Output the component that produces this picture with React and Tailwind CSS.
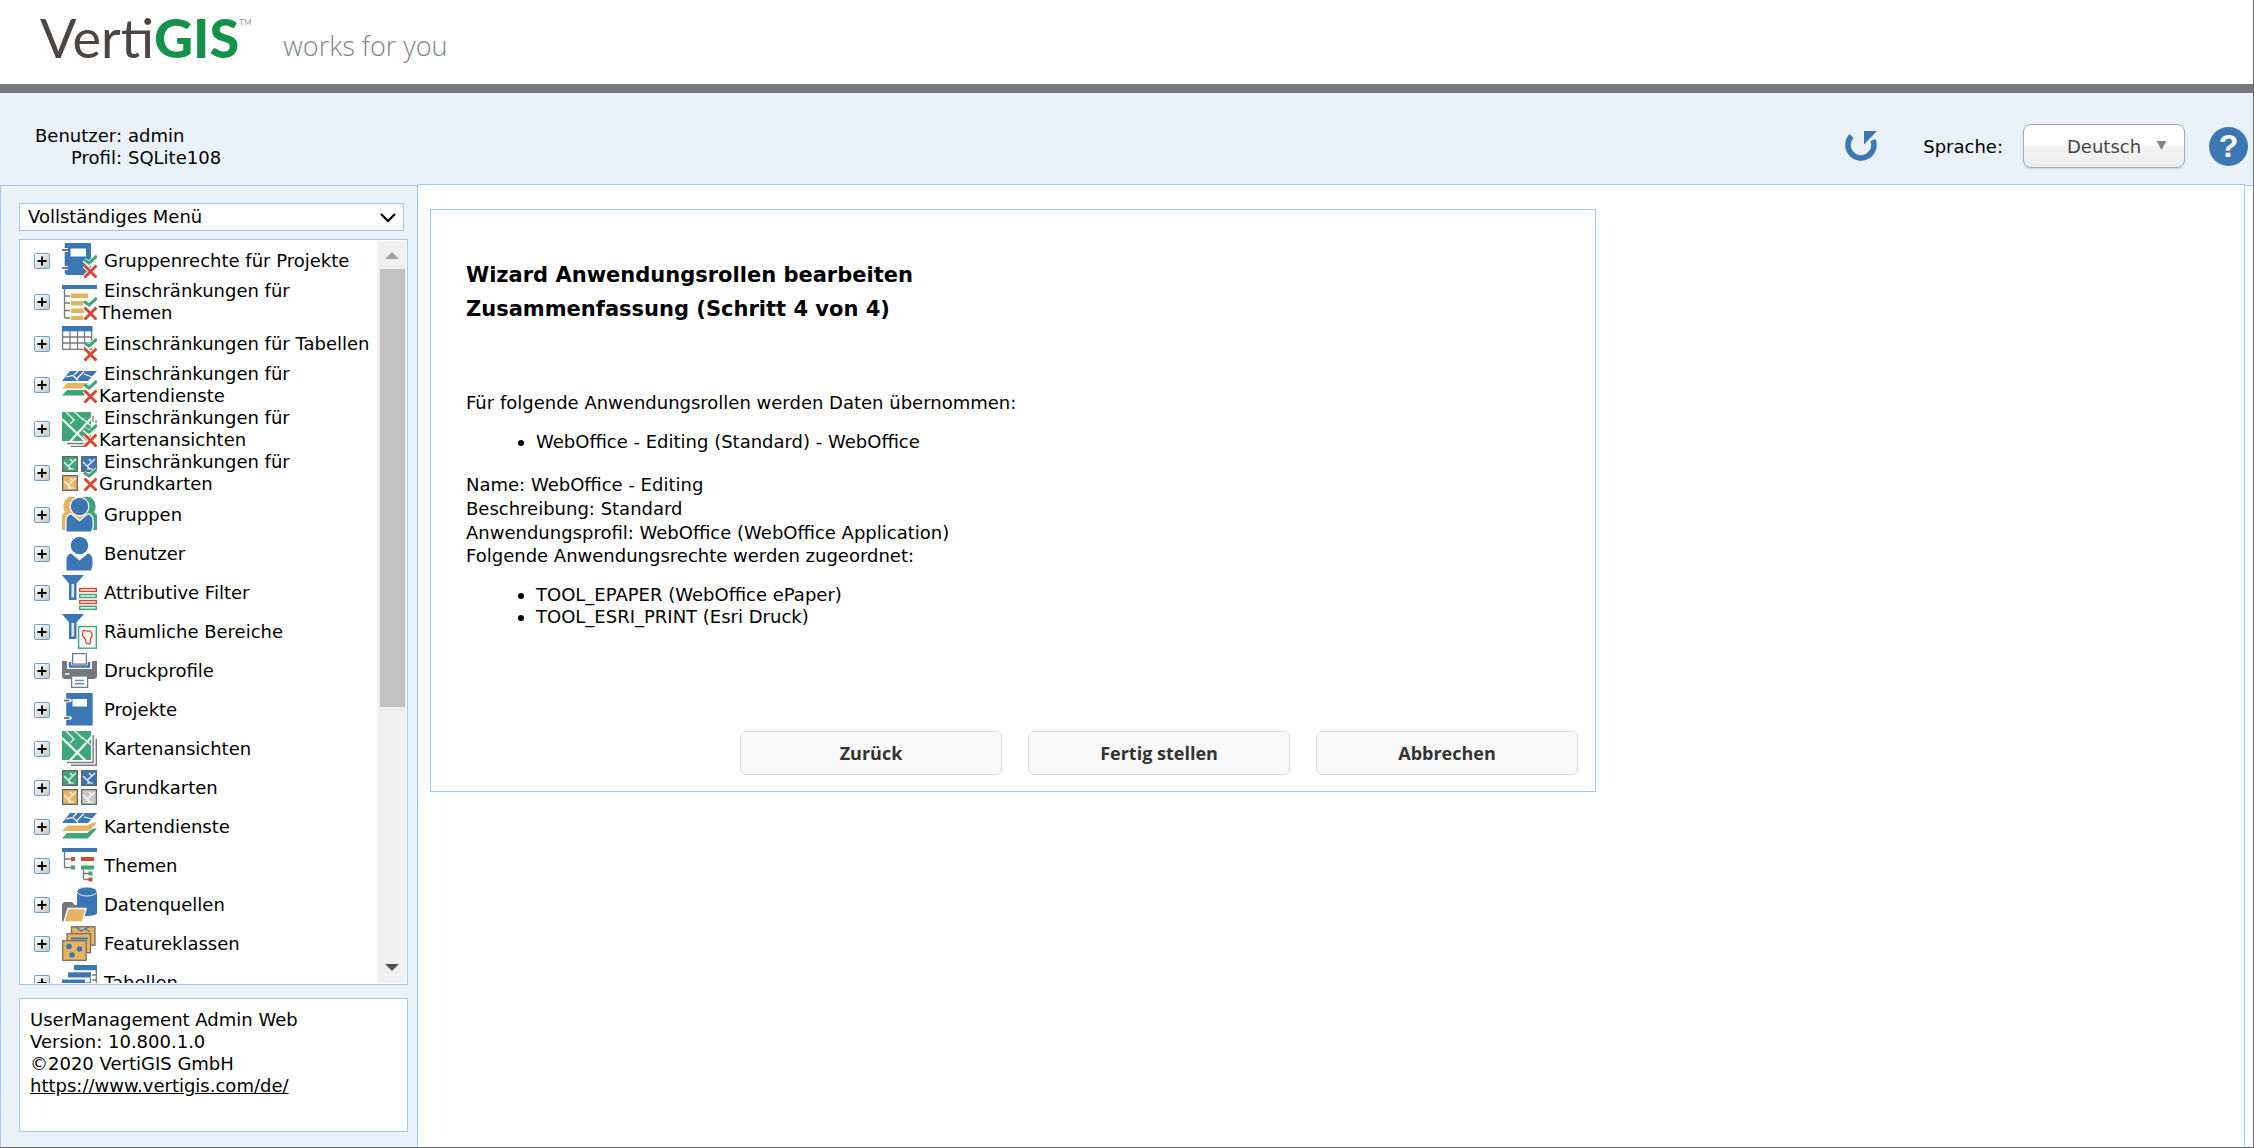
import { useState } from "react"

const BLUE = "#3d77b3"
const GREEN = "#3ea679"
const ORANGE = "#e8b35f"
const RED = "#d14a33"
const GRAY = "#77787b"

function Icon({ children }) {
  return (
    <svg viewBox="0 0 35 35" className="h-[35px] w-[35px] shrink-0" aria-hidden="true">
      {children}
    </svg>
  )
}

// green check and red cross in the lower right corner of the rights icons
function Rights() {
  return (
    <g fill="none">
      <path d="M22 17l5 3.5 8-7M22.5 22.5l12 12M34.5 22.5l-12 12" stroke="#fff" strokeWidth="5" />
      <path d="M22 16.5l5 3.5 8-7" stroke={GREEN} strokeWidth="3" />
      <path d="M22.5 22.5l12 12M34.5 22.5l-12 12" stroke={RED} strokeWidth="3" />
    </g>
  )
}

function MapTile({ x, y, fill }) {
  return (
    <g>
      <rect x={x + 0.6} y={y + 0.6} width="14.8" height="14.8" fill={fill} stroke="#666" strokeWidth="1.3" />
      <path
        d={`M${x + 2} ${y + 6}l7 7M${x + 14} ${y + 3}l-8 7.5M${x + 8} ${y + 3}l3 3`}
        stroke="#fff"
        strokeOpacity=".85"
        strokeWidth="1.5"
        fill="none"
      />
      <path d={`M${x + 6} ${y + 13}h6`} stroke="#fff" strokeOpacity=".8" strokeWidth="1.2" />
    </g>
  )
}

function MapSheet() {
  return (
    <g>
      <rect width="29" height="29" fill={GREEN} />
      <path d="M0 7l24 23M29.5 6L8 29.5" stroke="#fff" strokeWidth="2.2" fill="none" />
      <path d="M4 0l8 8-4 4M13 0l8 8M20 6l9 8M12 0l2 1" stroke="#d6eee3" strokeWidth="1.5" fill="none" />
    </g>
  )
}

function Layers() {
  return (
    <g>
      <path d="M8 4H35L26 14H0z" fill={BLUE} />
      <path d="M4 10l7-1.5 5 5M14 12.5l8-8M22 8l8 2M11 8l4-4" stroke="#fff" strokeWidth="1.2" fill="none" />
      <path d="M0 22L6 16.5H25L31 13.5H35L27 22z" fill={ORANGE} />
      <path d="M0 29.5L5 24H25L31 19.5H35L26 29.5z" fill={GREEN} />
    </g>
  )
}

function Funnel() {
  return (
    <g>
      <path d="M0 0H22L14.5 8.5V25H7V8.500z" fill={BLUE} />
      <path d="M9.5 9h2.600v13.5h-2.600z" fill="#e3edf7" />
    </g>
  )
}

function Person() {
  return (
    <g fill={BLUE}>
      <circle cx="17.5" cy="9.5" r="8.7" />
      <path d="M4.5 34.5V24c0-3.500 1.500-6 4.500-6.500l8.500 7 8.500-7c3 .5 4.500 3 4.500 6.500v6l-1.500 4.500z" />
    </g>
  )
}

const icons = {
  projectRights: (
    <Icon>
      <path d="M2.700 0H29V32H4.500L2.700 30z" fill={BLUE} />
      <rect x="8.5" y="5.5" width="15.5" height="8" fill="#fff" />
      <path d="M0 7h6M0 25h6" stroke="#fff" strokeWidth="4" />
      <path d="M0 7h6M0 25h6" stroke={GRAY} strokeWidth="2" />
      <Rights />
    </Icon>
  ),
  themeRights: (
    <Icon>
      <rect width="35" height="4" fill={BLUE} />
      <path d="M2.5 4v29M2.5 11H8M2.5 18H8M2.5 25.5H8M2.5 33H8" stroke={GRAY} strokeWidth="1.3" fill="none" />
      <path d="M9 8.500h17V13H9zM9 16h14v4.500H9zM9 23.500h13V28H9zM9 31h12v4H9z" fill={ORANGE} />
      <Rights />
    </Icon>
  ),
  tableRights: (
    <Icon>
      <path d="M.6 5v18.400h29V5M8 5v18.400M15.500 5v18.400M22.500 5v18.400M0 11h30M0 17h30" stroke={GRAY} strokeWidth="1.3" fill="none" />
      <rect width="30.5" height="5.3" fill={BLUE} />
      <Rights />
    </Icon>
  ),
  serviceRights: (
    <Icon>
      <path d="M8 3H35L26 13H0z" fill={BLUE} />
      <path d="M4 9l7-1.500 5 5M14 11.500l8-8M22 6l8 3M12 7l4-4" stroke="#fff" strokeWidth="1.2" fill="none" />
      <path d="M0 20.500l5-5.500h22L22 20.500z" fill={ORANGE} />
      <path d="M0 27.500L5 22h20l-3 5.500z" fill={GREEN} />
      <Rights />
    </Icon>
  ),
  viewRights: (
    <Icon>
      <MapSheet />
      <path d="M5 31.500h17M9 34.300h14M31 4v6M34 8v3" stroke={GRAY} strokeWidth="1.3" />
      <Rights />
    </Icon>
  ),
  basemapRights: (
    <Icon>
      <MapTile x={0} y={0} fill={GREEN} />
      <MapTile x={19} y={0} fill={BLUE} />
      <MapTile x={0} y={19} fill={ORANGE} />
      <Rights />
    </Icon>
  ),
  groups: (
    <Icon>
      <path d="M0 33V18l3-3C0 11 1 3 7 0h11v33z" fill={ORANGE} />
      <path d="M35 33V18l-3-3c3-4 2-12-4-15H17.500v33z" fill={GREEN} />
      <path d="M8 17l9.500 8 9.500-8z" fill={ORANGE} />
      <g stroke="#fff" strokeWidth="2.5">
        <Person />
      </g>
      <Person />
    </Icon>
  ),
  users: (
    <Icon>
      <Person />
    </Icon>
  ),
  attributeFilter: (
    <Icon>
      <Funnel />
      <g strokeWidth="1.4">
        <rect x="17.7" y="13.5" width="16.6" height="3" fill="#fbe3de" stroke={RED} />
        <rect x="17.7" y="19.5" width="16.6" height="3" fill="#e0f3ea" stroke={GREEN} />
        <rect x="17.7" y="25.5" width="16.6" height="3" fill="#fbe3de" stroke={RED} />
        <rect x="17.7" y="31.3" width="16.6" height="3" fill="#e0f3ea" stroke={GREEN} />
      </g>
    </Icon>
  ),
  spatialFilter: (
    <Icon>
      <Funnel />
      <rect x="16.6" y="12.6" width="17.7" height="21.6" fill="#fff" stroke={GREEN} strokeWidth="1.4" />
      <path d="M21 17c2-1.500 3 .5 5 0s4 1 4 4-2 3-1.500 5 0 4-2 4-3-2-3-4-3-3-3-5 0-3 .5-4z" fill="#fff3f0" stroke={RED} strokeWidth="1.3" />
    </Icon>
  ),
  print: (
    <Icon>
      <path d="M0 8h6l3 6h17l3-6h6v16l-2 2H2l-2-2z" fill={GRAY} />
      <path d="M7 8v6h21V8" fill="none" stroke="#fff" strokeWidth="4" />
      <path d="M8 9v4.500h19V9" fill="none" stroke={BLUE} strokeWidth="2.5" />
      <rect x="10.6" y=".6" width="13.8" height="10.5" fill="#fff" stroke={GRAY} strokeWidth="1.3" />
      <path d="M3 21h4.500" stroke="#fff" strokeWidth="1.5" />
      <rect x="9.6" y="23" width="16" height="11.4" fill="#fff" stroke={GRAY} strokeWidth="1.3" />
      <path d="M13 27.500h9M13 30.700h9" stroke="#5d92c8" strokeWidth="1.4" />
    </Icon>
  ),
  projects: (
    <Icon>
      <rect x="4.2" y="1" width="26.5" height="32.5" fill={BLUE} />
      <rect x="10.5" y="7" width="14.5" height="7.5" fill="#fff" />
      <path d="M2 8.500h6M2 26h6" stroke="#fff" strokeWidth="3.5" strokeLinecap="round" />
      <path d="M2 8.500h5.500M2 26h5.500" stroke={GRAY} strokeWidth="2" />
    </Icon>
  ),
  mapViews: (
    <Icon>
      <MapSheet />
      <path d="M31.200 4v27.500H5M34.300 8v26.300H9" stroke={GRAY} strokeWidth="1.4" fill="none" />
    </Icon>
  ),
  basemaps: (
    <Icon>
      <MapTile x={0} y={0} fill={GREEN} />
      <MapTile x={19} y={0} fill={BLUE} />
      <MapTile x={0} y={19} fill={ORANGE} />
      <MapTile x={19} y={19} fill="#c9c9c9" />
    </Icon>
  ),
  services: (
    <Icon>
      <Layers />
    </Icon>
  ),
  themes: (
    <Icon>
      <rect width="35" height="4" fill={BLUE} />
      <path d="M2.500 4v15.500M2.500 11H9M2.500 19.500H9M21.500 21v10.500M21.500 25.500h6M21.500 31.500h6" stroke={GRAY} strokeWidth="1.3" fill="none" />
      <path d="M9 9h4v4H9zM19 9h13v4H19zM26.500 29.500h4v4h-4z" fill={RED} />
      <path d="M9 17.500h4v4H9zM19 17.500h13v4H19zM26.500 23.500h4v4h-4z" fill={GREEN} />
    </Icon>
  ),
  sources: (
    <Icon>
      <path d="M0 34.500V17l2-2h8l3 3h2v16.500z" fill={GRAY} />
      <path d="M15 5v21c0 4 20 4 20 0V5z" fill={BLUE} />
      <ellipse cx="25" cy="4.5" rx="10" ry="4.5" fill={BLUE} stroke="#dce8f4" strokeWidth="1" />
      <path d="M6 21.500h18L20.500 35H2z" fill={ORANGE} stroke="#fff" strokeWidth="1.4" />
    </Icon>
  ),
  featureClasses: (
    <Icon>
      <g fill={ORANGE} stroke="#77706a" strokeWidth="1.3">
        <rect x="9.5" y=".7" width="23.5" height="18.5" />
        <path d="M14 1l5 4 8-4M23 3l5 3" fill="none" stroke={BLUE} />
        <rect x="5" y="7.7" width="23.5" height="19" />
        <path d="M9 12.500h17" stroke={BLUE} strokeWidth="2" />
        <rect x=".7" y="14.7" width="23.5" height="19.6" />
      </g>
      <g fill={BLUE}>
        <circle cx="7" cy="20.5" r="2.8" />
        <circle cx="17.5" cy="23" r="2.8" />
        <circle cx="10" cy="29" r="2.8" />
      </g>
    </Icon>
  ),
  tables: (
    <Icon>
      <path d="M34.300 5v20M30 10h5M28.300 13v20M24 18h5M30 15h4" stroke={GRAY} strokeWidth="1.3" fill="none" />
      <path d="M12 0h23v5.200H12zM6 7.300h23v5.200H6zM0 14.500h23v5.200H0z" fill={BLUE} />
      <path d="M.6 20v14h22V20" stroke={GRAY} fill="none" />
    </Icon>
  ),
}

const menu = [
  { label: "Gruppenrechte für Projekte", icon: icons.projectRights },
  { label: "Einschränkungen für Themen", icon: icons.themeRights, wrap: true },
  { label: "Einschränkungen für Tabellen", icon: icons.tableRights },
  { label: "Einschränkungen für Kartendienste", icon: icons.serviceRights, wrap: true },
  { label: "Einschränkungen für Kartenansichten", icon: icons.viewRights, wrap: true },
  { label: "Einschränkungen für Grundkarten", icon: icons.basemapRights, wrap: true },
  { label: "Gruppen", icon: icons.groups },
  { label: "Benutzer", icon: icons.users },
  { label: "Attributive Filter", icon: icons.attributeFilter },
  { label: "Räumliche Bereiche", icon: icons.spatialFilter },
  { label: "Druckprofile", icon: icons.print },
  { label: "Projekte", icon: icons.projects },
  { label: "Kartenansichten", icon: icons.mapViews },
  { label: "Grundkarten", icon: icons.basemaps },
  { label: "Kartendienste", icon: icons.services },
  { label: "Themen", icon: icons.themes },
  { label: "Datenquellen", icon: icons.sources },
  { label: "Featureklassen", icon: icons.featureClasses },
  { label: "Tabellen", icon: icons.tables },
]

function MenuItem({ item }) {
  return (
    <li className={item.wrap ? "flex h-11 items-center" : "flex h-[39px] items-center"}>
      <button
        aria-label={`${item.label} aufklappen`}
        className="mr-3 flex h-4 w-4 shrink-0 items-center justify-center rounded-xs border border-[#6f9fd0] bg-linear-to-br from-white to-[#c9c9c4]"
      >
        <svg viewBox="0 0 10 10" className="h-[10px] w-[10px]" aria-hidden="true">
          <path d="M5 .5v9M.5 5h9" stroke="#000" strokeWidth="1.8" />
        </svg>
      </button>
      {item.icon}
      <a
        href="#"
        className={
          item.wrap
            ? "ml-[2px] w-[200px] indent-[5px] leading-[22px]"
            : "ml-[2px] indent-[5px] leading-[22px] whitespace-nowrap"
        }
      >
        {item.label}
      </a>
    </li>
  )
}

function Header() {
  return (
    <header className="flex h-[93px] shrink-0 items-start border-b-[9px] border-[#77787b] bg-white pl-10">
      <div className="flex items-start pt-[6px] font-['Lato'] text-[54px] leading-[64px]">
        <span className="font-normal text-[#4d4541]">Verti</span>
        <span className="font-black text-[#15924a]">GIS</span>
        <span className="pt-[10px] text-[8px] leading-[12px] text-[#999]">TM</span>
      </div>
      <span className="ml-8 pt-6 font-['Open_Sans'] text-[27px] leading-[44px] font-light text-[#7b878d]">
        works for you
      </span>
    </header>
  )
}

function Toolbar() {
  const [language, setLanguage] = useState("Deutsch")
  return (
    <div className="flex h-[91px] shrink-0 justify-between bg-[#eaf1f9]">
      <dl className="grid grid-cols-[auto_auto] content-start gap-x-[6px] pt-8 pl-[35px] leading-[22px]">
        <dt className="text-right">Benutzer:</dt>
        <dd>admin</dd>
        <dt className="text-right">Profil:</dt>
        <dd>SQLite108</dd>
      </dl>
      <div className="mt-[31px] flex h-[44px] items-center self-start pr-[5px]">
        <button aria-label="Neu laden" className="mr-[46px]">
          <svg viewBox="0 0 32 32" className="h-8 w-8" aria-hidden="true">
            <path d="M6.500 6A13 13 0 1 0 28 10" fill="none" stroke="#3d77b3" strokeWidth="5.5" />
            <path d="M19 1H32L19 14.500z" fill="#3d77b3" />
          </svg>
        </button>
        <label htmlFor="language">Sprache:</label>
        <div className="relative ml-5">
          <select
            id="language"
            value={language}
            onChange={(e) => setLanguage(e.target.value)}
            className="h-[44px] w-[162px] appearance-none rounded-lg border border-[#aaa] bg-linear-to-b from-white from-50% via-[#f3f3f3] via-50% to-[#eee] pl-[43px] text-[#444] shadow-sm"
          >
            <option>Deutsch</option>
            <option>English</option>
          </select>
          <svg viewBox="0 0 10 9" className="pointer-events-none absolute top-[17px] right-[18px] h-[9px] w-[11px]" aria-hidden="true">
            <path d="M0 0h10L5 9z" fill="#888" />
          </svg>
        </div>
        <button
          aria-label="Hilfe"
          className="ml-6 flex h-[39px] w-[39px] items-center justify-center rounded-full bg-[#3d77b3] font-['Liberation_Sans'] text-[32px] leading-[39px] font-bold text-white"
        >
          ?
        </button>
      </div>
    </div>
  )
}

function Sidebar() {
  return (
    <aside className="mt-px flex w-[417px] shrink-0 flex-col border-t border-l border-[#a6c8ee] bg-[#eaf1f9] pt-[17px] pr-[9px] pb-[15px] pl-[18px]">
      <div className="relative mr-1 shrink-0">
        <select
          aria-label="Menü"
          className="block h-7 w-full appearance-none border border-[#a6c8ee] bg-white pl-2 leading-[22px]"
        >
          <option>Vollständiges Menü</option>
        </select>
        <svg viewBox="0 0 16 10" className="pointer-events-none absolute top-[10px] right-2 h-[10px] w-4" aria-hidden="true">
          <path d="M1 1l7 7 7-7" fill="none" stroke="#000" strokeWidth="2.2" />
        </svg>
      </div>
      <nav className="mt-2 flex min-h-0 flex-1 border border-[#a6c8ee] bg-white p-px">
        <ul className="min-w-0 flex-1 overflow-hidden pl-[13px]">
          {menu.map((item) => (
            <MenuItem key={item.label} item={item} />
          ))}
        </ul>
        <div className="flex w-[29px] flex-col items-center bg-[#f0f0f0] pt-[11px] pb-3" aria-hidden="true">
          <svg viewBox="0 0 14 7" className="h-[7px] w-[14px] shrink-0">
            <path d="M0 7L7 0l7 7z" fill="#a3a3a3" />
          </svg>
          <div className="mt-[10px] flex-1 pl-[2px]">
            <div className="h-[63%] w-[25px] bg-[#c1c1c1]" />
          </div>
          <svg viewBox="0 0 14 7" className="h-[7px] w-[14px] shrink-0">
            <path d="M0 0h14L7 7z" fill="#505050" />
          </svg>
        </div>
      </nav>
      <footer className="mt-[13px] h-[134px] shrink-0 border border-[#a6c8ee] bg-white px-[10px] pt-[10px] leading-[22px]">
        <p>UserManagement Admin Web</p>
        <p>Version: 10.800.1.0</p>
        <p>©2020 VertiGIS GmbH</p>
        <a href="#" className="underline">
          https://www.vertigis.com/de/
        </a>
      </footer>
    </aside>
  )
}

function WizardButton({ children }) {
  return (
    <button className="h-[44px] w-[262px] rounded-md border border-[#dcdcdc] bg-[#f9f9f9] font-['Open_Sans'] text-[18px] font-bold text-[#333]">
      {children}
    </button>
  )
}

function Wizard() {
  return (
    <section className="w-[1166px] max-w-full border border-[#a6c8ee] pt-12 pr-[17px] pb-4 pl-[35px] leading-[22px]">
      <h1 className="text-[21px] leading-[34px] font-bold">
        Wizard Anwendungsrollen bearbeiten
        <br />
        Zusammenfassung (Schritt 4 von 4)
      </h1>
      <p className="mt-[66px]">Für folgende Anwendungsrollen werden Daten übernommen:</p>
      <ul className="mt-[17px] list-disc pl-[70px]">
        <li>WebOffice - Editing (Standard) - WebOffice</li>
      </ul>
      <div className="mt-5 leading-6">
        <p>Name: WebOffice - Editing</p>
        <p>Beschreibung: Standard</p>
        <p>Anwendungsprofil: WebOffice (WebOffice Application)</p>
      </div>
      <p>Folgende Anwendungsrechte werden zugeordnet:</p>
      <ul className="mt-[17px] list-disc pl-[70px]">
        <li>TOOL_EPAPER (WebOffice ePaper)</li>
        <li>TOOL_ESRI_PRINT (Esri Druck)</li>
      </ul>
      <div className="mt-[103px] flex justify-end gap-[26px]">
        <WizardButton>Zurück</WizardButton>
        <WizardButton>Fertig stellen</WizardButton>
        <WizardButton>Abbrechen</WizardButton>
      </div>
    </section>
  )
}

export default function App() {
  return (
    <div className="flex h-screen flex-col overflow-hidden border-r border-b border-[#6b6b6b] bg-white font-['DejaVu_Sans',sans-serif] text-[18px] text-black">
      <Header />
      <Toolbar />
      <div className="flex min-h-0 flex-1 bg-[#eaf1f9]">
        <Sidebar />
        <main className="min-w-0 flex-1 border-x border-t border-[#a6c8ee] bg-white px-3 pt-6">
          <Wizard />
        </main>
        <div className="mt-px w-2 border-t border-[#a6c8ee] bg-white" />
      </div>
    </div>
  )
}
